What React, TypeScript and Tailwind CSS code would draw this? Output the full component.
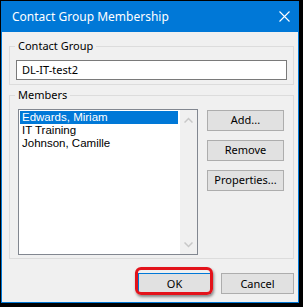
import React from "react"

const members = ["Edwards, Miriam", "IT Training", "Johnson, Camille"]

function Chevron({ up }: { up?: boolean }) {
  return (
    <svg width="9" height="6" viewBox="0 0 9 6" fill="none">
      <polyline
        points={up ? "0.5,5.5 4.5,1.5 8.5,5.5" : "0.5,0.5 4.5,4.5 8.5,0.5"}
        stroke="#c8c8c8"
        strokeWidth="1.5"
      />
    </svg>
  )
}

function DlgButton({ children, focused }: { children: React.ReactNode; focused?: boolean }) {
  return (
    <button
      className={`w-[73px] h-[21px] bg-[#e1e1e1] border text-[#000] leading-none ${
        focused ? "border-[#0078d7]" : "border-[#adadad]"
      }`}
    >
      {children}
    </button>
  )
}

export default function App() {
  return (
    <div className="w-[303px] h-[307px] bg-black pl-[1px] pt-[1px] font-['Noto_Sans',sans-serif] text-[11px] text-[#000]">
      <div className="w-[298px] h-[302px] bg-[#0078d7] flex flex-col">
        {/* Title bar */}
        <div className="h-[31px] flex items-center justify-between pl-[11px] pr-[9px] text-white text-[12px]">
          <span>Contact Group Membership</span>
          <svg width="11" height="11" viewBox="0 0 11 11">
            <path d="M0.5 0.5 L10.5 10.5 M10.5 0.5 L0.5 10.5" stroke="white" strokeWidth="1.1" />
          </svg>
        </div>

        {/* Body */}
        <div className="flex-1 bg-[#f0f0f0] mx-[1px] mb-[1px] pl-[7px] pt-[6px] flex flex-col">
          <fieldset className="w-[285px] border border-[#dcdcdc] px-[6px] pb-[4px]">
            <legend className="-ml-[1px] px-[3px] leading-[16px]">Contact Group</legend>
            <div className="mt-[6px] h-[20px] border border-[#7a7a7a] bg-white pl-[5px] flex items-center">
              DL-IT-test2
            </div>
          </fieldset>

          <fieldset className="w-[285px] mt-[2px] border border-[#dcdcdc] px-[6px] pb-[3px]">
            <legend className="-ml-[1px] px-[3px] leading-[16px]">Members</legend>
            <div className="mt-[6px] pl-[2px] flex gap-[9px]">
              <div className="w-[180px] h-[146px] border border-[#828790] bg-white flex">
                <div className="flex-1 pt-[1px] pl-[1px] pr-[2px] font-['Liberation_Sans',sans-serif] text-[11.5px]">
                  {members.map((m, i) => (
                    <div
                      key={m}
                      className={`h-[13px] leading-[13px] pl-[2px] ${i === 0 ? "bg-[#0078d7] text-white" : ""}`}
                    >
                      {m}
                    </div>
                  ))}
                </div>
                <div className="w-[17px] bg-[#f0f0f0] flex flex-col justify-between items-center pt-[7px] pb-[6px]">
                  <Chevron up />
                  <Chevron />
                </div>
              </div>
              <div className="mt-[1px] flex flex-col gap-[9px]">
                <button className="w-[77px] h-[21px] bg-[#e1e1e1] border border-[#adadad]">Add...</button>
                <button className="w-[77px] h-[21px] bg-[#e1e1e1] border border-[#adadad]">Remove</button>
                <button className="w-[77px] h-[21px] bg-[#e1e1e1] border border-[#adadad]">Properties...</button>
              </div>
            </div>
          </fieldset>

          {/* Footer buttons */}
          <div className="mt-[14px] w-[285px] flex justify-end gap-[10px]">
            <div className="relative">
              <DlgButton focused>OK</DlgButton>
              <span className="absolute -left-[3px] -top-[6px] -right-[2px] -bottom-[1px] border-[3px] border-[#e3131b] rounded-[6px] shadow-[1px_2px_3px_rgba(0,0,0,0.45)]" />
            </div>
            <DlgButton>Cancel</DlgButton>
          </div>
        </div>
      </div>
    </div>
  )
}
